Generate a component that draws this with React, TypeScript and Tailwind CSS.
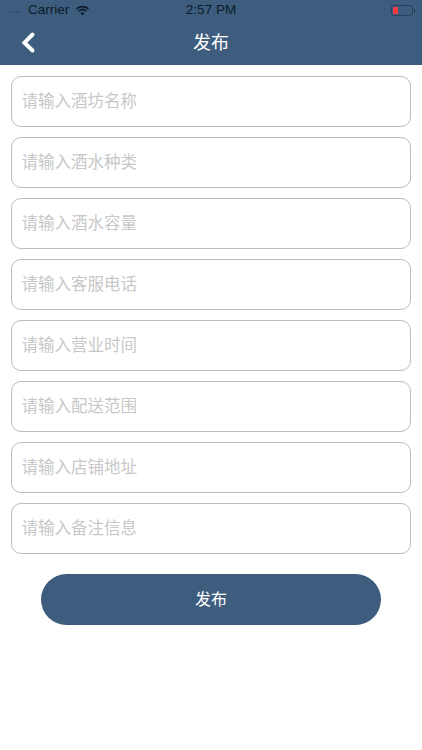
const FIELDS = [
  "请输入酒坊名称",
  "请输入酒水种类",
  "请输入酒水容量",
  "请输入客服电话",
  "请输入营业时间",
  "请输入配送范围",
  "请输入店铺地址",
  "请输入备注信息",
];

const FONT = "font-['Liberation_Sans','Noto_Sans_CJK_SC',sans-serif]";

function StatusBar() {
  return (
    <div className="relative flex h-[21px] items-center text-[13.5px] text-[#0b1a2a]">
      <div className="ml-[7px] mt-[3px] flex items-center gap-[1px] opacity-70">
        {[0, 1, 2, 3, 4].map((i) => (
          <span key={i} className="h-[2px] w-[2px] rounded-full bg-[#2b4560]" />
        ))}
      </div>
      <span className="ml-[7px]">Carrier</span>
      <svg className="ml-[6px]" width="15" height="11" viewBox="0 0 17 12" fill="#0b1a2a">
        <path d="M8.5 2.6c2.3 0 4.4.9 6 2.4l1.3-1.4C13.900 1.800 11.300.7 8.500.7S3.100 1.800 1.200 3.600L2.500 5c1.600-1.500 3.700-2.400 6-2.400z" />
        <path d="M8.500 6c1.400 0 2.700.5 3.700 1.400l1.300-1.400C12.200 4.800 10.400 4.100 8.500 4.100S4.800 4.800 3.500 6l1.300 1.400C5.800 6.500 7.100 6 8.500 6z" />
        <path d="M8.500 11.500 11 8.800c-.7-.6-1.500-.9-2.500-.9s-1.800.3-2.500.9z" />
      </svg>
      <span className="absolute left-0 right-0 text-center">2:57 PM</span>
      <div className="ml-auto mr-[7px] flex items-center">
        <div className="flex h-[11px] w-[22px] items-center rounded-[3px] border border-[#2a405a] p-[1px]">
          <span className="h-full w-[4.5px] rounded-[1px] bg-[#f53b3b]" />
        </div>
        <span className="ml-[1px] h-[4px] w-[1px] bg-[#2a405a]" />
      </div>
    </div>
  );
}

export default function App() {
  return (
    <div className={`h-[750px] w-[422px] overflow-hidden bg-white ${FONT}`}>
      <header className="h-[65px] bg-[#3e5d7e]">
        <StatusBar />
        <div className="relative flex h-[44px] items-center justify-center">
          <svg
            className="absolute left-[20px] top-[10px]"
            width="16"
            height="24"
            viewBox="0 0 16 24"
            fill="none"
            stroke="#fff"
            strokeWidth="4"
            strokeLinecap="round"
            strokeLinejoin="miter"
          >
            <path d="M12.500 3.500 4.500 11.700 12.500 19.500" />
          </svg>
          <h1 className="mt-[1px] text-[18px] font-normal text-white">发布</h1>
        </div>
      </header>

      <form className="flex flex-col items-center">
        <div className="mt-[11px] flex w-full flex-col gap-[10px] px-[11px]">
          {FIELDS.map((placeholder) => (
            <input
              key={placeholder}
              type="text"
              placeholder={placeholder}
              className="h-[51px] w-full rounded-[10px] border-[1.5px] border-[#bcbcbc] bg-white px-[9.500px] text-[16.500px] outline-none placeholder:text-[#c8c8c8]"
            />
          ))}
        </div>
        <button
          type="button"
          className="mt-[20px] h-[51px] w-[340px] rounded-full bg-[#3e5d7e] pt-[1px] text-[16px] text-white"
        >
          发布
        </button>
      </form>
    </div>
  );
}
